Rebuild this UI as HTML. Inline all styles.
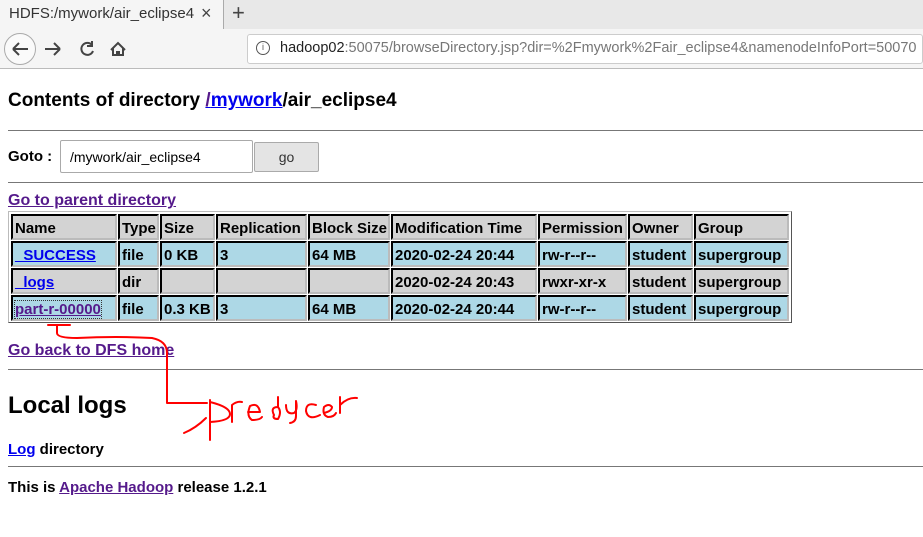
<!DOCTYPE html>
<html><head><meta charset="utf-8"><style>
*{margin:0;padding:0;box-sizing:border-box}
body{width:923px;height:537px;overflow:hidden;background:#fff;font-family:"Liberation Sans","DejaVu Sans",sans-serif;position:relative}
.a{position:absolute;white-space:nowrap}
.c{position:absolute;border:2px inset #888;border-color:#555 #bbb #bbb #555;font-weight:bold;font-size:15px;padding:3px 2px 0 2px;line-height:19px;overflow:hidden;white-space:nowrap}
.h{background:#d3d3d3}.b{background:#add8e6}.g{background:#d3d3d3}
a{color:#00e;text-decoration:underline}
.v{color:#551a8b}
hr{position:absolute;left:8px;width:915px;height:1px;border:0;background:#777}
</style></head><body>
<div class="a" style="left:0;top:0;width:923px;height:30px;background:#e8e8e8"></div>
<div class="a" style="left:0;top:0;width:224px;height:30px;background:#f5f5f5;border-right:1px solid #aaa"></div>
<div class="a" style="left:9px;top:5px;font-size:15px;color:#333">HDFS:/mywork/air_eclipse4</div>
<div class="a" style="left:201px;top:3px;font-size:18px;color:#444">×</div>
<div class="a" style="left:232px;top:0px;font-size:22px;color:#444">+</div>
<div class="a" style="left:0;top:29px;width:923px;height:40px;background:#f5f5f5;border-bottom:1px solid #bbb"></div>
<div class="a" style="left:4px;top:33px;width:32px;height:32px;border:1px solid #aaa;border-radius:50%;background:#fafafa"></div>
<svg class="a" style="left:0;top:29px" width="140" height="40"><g stroke="#444" stroke-width="2" fill="none"><path d="M13 20h15M13 20l6-6M13 20l6 6"/><path d="M45 20h15M60 20l-6-6M60 20l-6 6"/><path d="M92 16a6 6 0 1 0 1 6M92 12v5h-5"/><path d="M111 21l7-7 7 7M113 19v7h10v-7"/></g><rect x="116" y="22" width="4" height="4" fill="#444"/></svg>
<div class="a" style="left:247px;top:34px;width:676px;height:30px;background:#fff;border:1px solid #ccc;border-radius:3px"></div>
<div class="a" style="left:256px;top:41px;width:14px;height:14px;border:1.5px solid #555;border-radius:50%;font-size:9px;text-align:center;line-height:11px;color:#555">i</div>
<div class="a" style="left:280px;top:40px;font-size:14.5px;color:#222">hadoop02<span style="color:#777">:50075/browseDirectory.jsp?dir=%2Fmywork%2Fair_eclipse4&amp;namenodeInfoPort=50070</span></div>
<div class="a" style="left:8px;top:90px;font-size:19px;font-weight:bold">Contents of directory <a href="#"><span class="v">/</span>mywork</a>/air_eclipse4</div>
<hr style="top:130px">
<div class="a" style="left:8px;top:148px;font-size:15px;font-weight:bold">Goto :</div>
<div class="a" style="left:60px;top:140px;width:193px;height:33px;border:1px solid #aaa;border-radius:2px;font-size:14px;padding:8px 9px">/mywork/air_eclipse4</div>
<div class="a" style="left:254px;top:142px;width:65px;height:30px;border:1px solid #aaa;background:#e4e4e4;border-radius:2px;font-size:14px;text-align:center;line-height:28px;color:#333">go</div>
<hr style="top:182px">
<div class="a" style="left:8px;top:192px;font-size:16px;font-weight:bold"><a class="v" href="#">Go to parent directory</a></div>
<div class="a" style="left:8px;top:211px;width:784px;height:112px;border:1px solid;border-color:#bbb #555 #555 #bbb"></div>
<div class="c h" style="left:11px;top:214px;width:106px;height:26px">Name</div>
<div class="c h" style="left:118px;top:214px;width:41px;height:26px">Type</div>
<div class="c h" style="left:160px;top:214px;width:55px;height:26px">Size</div>
<div class="c h" style="left:216px;top:214px;width:91px;height:26px">Replication</div>
<div class="c h" style="left:308px;top:214px;width:82px;height:26px">Block Size</div>
<div class="c h" style="left:391px;top:214px;width:146px;height:26px">Modification Time</div>
<div class="c h" style="left:538px;top:214px;width:89px;height:26px">Permission</div>
<div class="c h" style="left:628px;top:214px;width:65px;height:26px">Owner</div>
<div class="c h" style="left:694px;top:214px;width:95px;height:26px">Group</div>

<div class="c b" style="left:11px;top:241px;width:106px;height:26px"><a href="#">_SUCCESS</a></div>
<div class="c b" style="left:118px;top:241px;width:41px;height:26px">file</div>
<div class="c b" style="left:160px;top:241px;width:55px;height:26px">0 KB</div>
<div class="c b" style="left:216px;top:241px;width:91px;height:26px">3</div>
<div class="c b" style="left:308px;top:241px;width:82px;height:26px">64 MB</div>
<div class="c b" style="left:391px;top:241px;width:146px;height:26px">2020-02-24 20:44</div>
<div class="c b" style="left:538px;top:241px;width:89px;height:26px">rw-r--r--</div>
<div class="c b" style="left:628px;top:241px;width:65px;height:26px">student</div>
<div class="c b" style="left:694px;top:241px;width:95px;height:26px">supergroup</div>

<div class="c g" style="left:11px;top:268px;width:106px;height:26px"><a href="#">_logs</a></div>
<div class="c g" style="left:118px;top:268px;width:41px;height:26px">dir</div>
<div class="c g" style="left:160px;top:268px;width:55px;height:26px"></div>
<div class="c g" style="left:216px;top:268px;width:91px;height:26px"></div>
<div class="c g" style="left:308px;top:268px;width:82px;height:26px"></div>
<div class="c g" style="left:391px;top:268px;width:146px;height:26px">2020-02-24 20:43</div>
<div class="c g" style="left:538px;top:268px;width:89px;height:26px">rwxr-xr-x</div>
<div class="c g" style="left:628px;top:268px;width:65px;height:26px">student</div>
<div class="c g" style="left:694px;top:268px;width:95px;height:26px">supergroup</div>

<div class="c b" style="left:11px;top:295px;width:106px;height:26px"><a class="v" href="#" style="outline:1px dotted #333">part-r-00000</a></div>
<div class="c b" style="left:118px;top:295px;width:41px;height:26px">file</div>
<div class="c b" style="left:160px;top:295px;width:55px;height:26px">0.3 KB</div>
<div class="c b" style="left:216px;top:295px;width:91px;height:26px">3</div>
<div class="c b" style="left:308px;top:295px;width:82px;height:26px">64 MB</div>
<div class="c b" style="left:391px;top:295px;width:146px;height:26px">2020-02-24 20:44</div>
<div class="c b" style="left:538px;top:295px;width:89px;height:26px">rw-r--r--</div>
<div class="c b" style="left:628px;top:295px;width:65px;height:26px">student</div>
<div class="c b" style="left:694px;top:295px;width:95px;height:26px">supergroup</div>

<div class="a" style="left:8px;top:342px;font-size:16px;font-weight:bold"><a class="v" href="#">Go back to DFS home</a></div>
<hr style="top:369px">
<div class="a" style="left:8px;top:392px;font-size:24px;font-weight:bold">Local logs</div>
<div class="a" style="left:8px;top:441px;font-size:15px;font-weight:bold"><a href="#">Log</a> directory</div>
<hr style="top:466px">
<div class="a" style="left:8px;top:479px;font-size:15px;font-weight:bold">This is <a class="v" href="#">Apache Hadoop</a> release 1.2.1</div>

<svg class="a" style="left:0;top:0" width="923" height="537"><g stroke="#f00" stroke-width="2" fill="none" stroke-linecap="round" stroke-linejoin="round">
<path d="M48 325h22M57 325v8q0 5 20 5 40-2 75 0 15 3 15 15v50h40"/>
<path d="M210 400v40M184 433q12-5 22-15M210 402q20 5 20 12t-20 8"/>
<path d="M232 422v-17q5-4 10-3"/>
<path d="M248 412h12q-2-10-10-6-4 10 2 14 8 0 10-3"/>
<path d="M274 415q-4-8 4-8 4 5 0 12-6 0-4-4M278 407v-10"/>
<path d="M286 405q0 10 8 8 4-3 2-12M296 401v15q0 6-6 7"/>
<path d="M316 405q-10-3-10 6 2 10 14 4"/>
<path d="M324 413q8-2 8-6-3-4-8 0-2 8 4 10 6 0 8-4"/>
<path d="M340 413v-16M340 405q8-8 17-7"/>
</g></svg>
</body></html>
